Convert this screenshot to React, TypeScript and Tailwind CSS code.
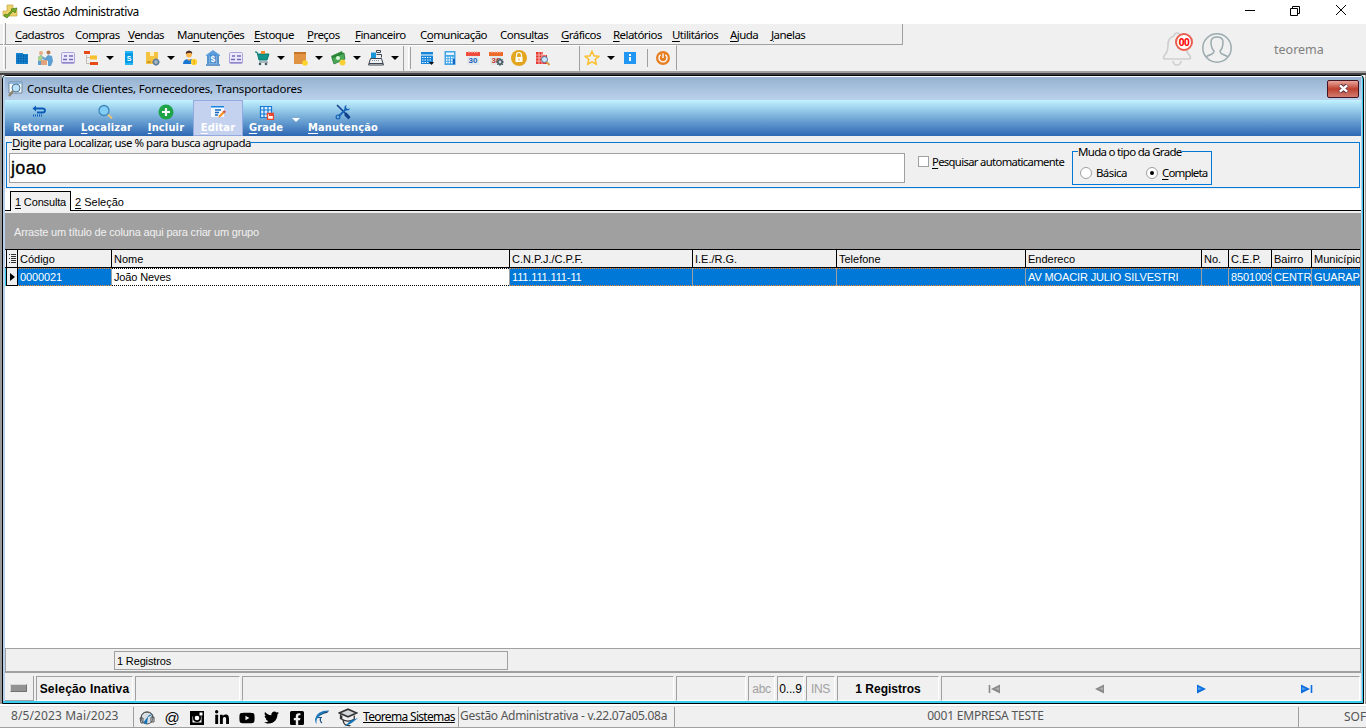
import type { ReactNode } from 'react';
import { clsx } from 'clsx';
import { FaFacebookSquare, FaLinkedinIn, FaTwitter, FaYoutube } from 'react-icons/fa';

const UI = 'font-[Noto_Sans,Open_Sans,sans-serif]';
const GRID = 'font-[Liberation_Sans,Arial,sans-serif]';

const menus = [
  { pre: '', key: 'C', post: 'adastros', w: 'w-[60px]' },
  { pre: 'Co', key: 'm', post: 'pras', w: 'w-[53px]' },
  { pre: '', key: 'V', post: 'endas', w: 'w-[49px]' },
  { pre: 'Ma', key: 'n', post: 'utenções', w: 'w-[77px]' },
  { pre: '', key: 'E', post: 'stoque', w: 'w-[53px]' },
  { pre: '', key: 'P', post: 'reços', w: 'w-[48px]' },
  { pre: '', key: 'F', post: 'inanceiro', w: 'w-[65px]' },
  { pre: 'C', key: 'o', post: 'municação', w: 'w-[80px]' },
  { pre: 'Consu', key: 'l', post: 'tas', w: 'w-[61px]' },
  { pre: '', key: 'G', post: 'ráficos', w: 'w-[52px]' },
  { pre: '', key: 'R', post: 'elatórios', w: 'w-[59px]' },
  { pre: '', key: 'U', post: 'tilitários', w: 'w-[58px]' },
  { pre: '', key: 'A', post: 'juda', w: 'w-[41px]' },
  { pre: '', key: 'J', post: 'anelas', w: 'w-[50px]' },
];

const columns = [
  { title: 'Código', value: '0000021', w: 'w-[94px]' },
  { title: 'Nome', value: 'João Neves', w: 'w-[398px]', focused: true },
  { title: 'C.N.P.J./C.P.F.', value: '111.111.111-11', w: 'w-[183px]' },
  { title: 'I.E./R.G.', value: '', w: 'w-[144px]' },
  { title: 'Telefone', value: '', w: 'w-[189px]' },
  { title: 'Endereco', value: 'AV MOACIR JULIO SILVESTRI', w: 'w-[176px]' },
  { title: 'No.', value: '', w: 'w-[27px]' },
  { title: 'C.E.P.', value: '8501009', w: 'w-[43px]' },
  { title: 'Bairro', value: 'CENTR', w: 'w-[40px]' },
  { title: 'Município', value: 'GUARAP', w: 'w-[49px]' },
];

function Icon({ children, className = 'size-4', box = 16 }: { children: ReactNode; className?: string; box?: number }) {
  return (
    <svg viewBox={`0 0 ${box} ${box}`} className={clsx('block shrink-0', className)} fill="none">
      {children}
    </svg>
  );
}

function Arrow() {
  return (
    <svg viewBox="0 0 8 4" className="block h-1 w-2 shrink-0">
      <path d="M0 0h8L4 4z" fill="#000" />
    </svg>
  );
}

function Grip() {
  return <div className="h-[22px] w-[3px] shrink-0 border-l border-r border-l-white border-r-[#a0a0a0]" />;
}

function CardIcon() {
  return (
    <Icon>
      <rect x="1.5" y="2.5" width="13" height="11" rx="1" fill="#ece9fc" stroke="#aaa3dc" />
      <path d="M4 6h3M3 9.5h4M9 6h4M9 9.5h4" stroke="#7469b6" strokeWidth="1.4" />
      <path d="M2 12.5h12" stroke="#8f87c8" />
    </Icon>
  );
}

function CalendarIcon({ color, gear }: { color: string; gear?: boolean }) {
  return (
    <Icon>
      <path d="M2 5h12v10H2z" fill="#e3e8ec" />
      <path d="M1 2h14v4H1z" fill={color} />
      <path d="M4 1v2M7 1v2M9.5 1v2M12 1v2" stroke="#f7b9a8" />
      <text x="3.6" y="13" fontSize="8" fontWeight="700" fill={gear ? '#c43d2c' : '#1565c0'} className="font-[Liberation_Sans,sans-serif]">
        30
      </text>
      {gear && (
        <>
          <circle cx="12" cy="12" r="2.2" fill="#cfd8dc" stroke="#455a64" strokeWidth="1.6" />
          <path d="M12 8v2M12 14v2M8 12h2M14 12h2M9.3 9.3l1 1M14 14l1 1M14.8 9.3l-1 1M9.3 14.8l1-1" stroke="#455a64" />
        </>
      )}
    </Icon>
  );
}

function MenuBar() {
  return (
    <div className="flex h-[21px] w-[903px] items-center border-b border-r border-[#a0a0a0] pl-[3px]">
      <Grip />
      <div className={clsx('ml-[9px] flex text-[11.5px] leading-[19px] tracking-[-0.55px]', UI)}>
        {menus.map((m) => (
          <div key={m.key + m.post} className={clsx('shrink-0 whitespace-nowrap', m.w)}>
            {m.pre}
            <span className="underline underline-offset-2">{m.key}</span>
            {m.post}
          </div>
        ))}
      </div>
    </div>
  );
}

function IconBar() {
  return (
    <div className="flex h-[25px] w-[677px] items-center border-t border-r border-t-white border-r-[#a0a0a0] pl-[3px]">
      <Grip />
      <div className="ml-2 flex w-[389px] shrink-0 items-center gap-[7px]">
        <Icon>
          <path d="M2 3h7v11H2zM9 4h5v10H9z" fill="#1685d4" />
          <path d="M2 6h12M2 8.5h12M2 11h12M9.5 4v10M12 5v9M4.5 4v10M7 4v10" stroke="#0760a6" strokeWidth=".7" />
        </Icon>
        <Icon>
          <circle cx="4" cy="3" r="2" fill="#e5ad84" />
          <circle cx="11.5" cy="2.5" r="2" fill="#b97b55" />
          <path d="M1 15V7l3-2 4 3 3-3 4 1 1 5-2 5h-3v-5l-3-1-3-1v6z" fill="#5e9fd3" />
          <path d="M1 7l3-2 2 2-2 4H1z" fill="#a9d08e" />
          <path d="M4 10h6v5H4z" fill="#e1a17a" />
        </Icon>
        <CardIcon />
        <Icon>
          <path d="M1 1h6v3H1zM7 12h8v3H7z" fill="#e64a19" />
          <path d="M7 5.5h7v4H7z" fill="#fbc02d" />
          <path d="M3.5 5v8.5H7M3.5 7.5H7" stroke="#b0a89c" strokeWidth=".7" />
        </Icon>
        <Arrow />
        <Icon>
          <path d="M4 1h8v14H4z" fill="#039be5" />
          <path d="M4 1h8v2H4zM4 13h8v2H4z" fill="#29b6f6" />
          <text x="5.8" y="11" fontSize="7" fontWeight="700" fill="#fff" className="font-[Liberation_Sans,sans-serif]">S</text>
        </Icon>
        <Icon>
          <path d="M2 2h12v12H2z" fill="#f5c342" />
          <path d="M6 2h4v4H6z" fill="#fff0bd" />
          <path d="M3 12h4" stroke="#a87918" />
          <circle cx="12" cy="12" r="2.5" fill="#fff" stroke="#607d9b" strokeWidth="1.7" />
          <path d="M12 8v8M8 12h8" stroke="#607d9b" strokeWidth=".7" />
        </Icon>
        <Arrow />
        <Icon>
          <circle cx="7" cy="4.5" r="3" fill="#ffb74d" />
          <path d="M4 4q-1-3 3-3.5 4 .5 3 3.5L9 3H6z" fill="#51342c" />
          <path d="M1 14q0-5 6-5t6 5z" fill="#1976d2" />
          <path d="M5 9l2 2 2-2" fill="#ffb74d" />
          <circle cx="12" cy="12" r="3.2" fill="#ffd43b" />
          <path d="M12 10v4" stroke="#e59d00" />
        </Icon>
        <Icon>
          <path d="M1 5l7-5 7 5v1H1z" fill="#5d9fdd" />
          <path d="M2 6h12v8H2z" fill="#a9d0f2" />
          <path d="M3 6v8M13 6v8M1 15h14" stroke="#3e7fc0" strokeWidth="1.5" />
          <path d="M4.5 4.5h7v9h-7z" fill="#478bcf" />
          <text x="5.6" y="12" fontSize="8.5" fontWeight="700" fill="#fff" className="font-[Liberation_Sans,sans-serif]">$</text>
        </Icon>
        <CardIcon />
        <Icon className="ml-[3px] size-4">
          <path d="M1 2h2l2 8h8l2-6H4" fill="#11958b" stroke="#087a72" />
          <path d="M7 1h4v3H7z" fill="#f08b32" />
          <path d="M5 12h9" stroke="#607d8b" />
          <circle cx="6" cy="14" r="1.3" fill="#455a64" />
          <circle cx="12" cy="14" r="1.3" fill="#455a64" />
        </Icon>
        <Arrow />
        <Icon>
          <path d="M2 2h12v12H2z" fill="#df9343" />
          <path d="M2 2h12v2H2z" fill="#c87728" />
          <circle cx="13" cy="13" r="2.8" fill="#ffd52d" />
        </Icon>
        <Arrow />
        <Icon>
          <path d="M1 6l11-5 2 5L3 11z" fill="#2d8b3e" />
          <path d="M2 8l12-5 1 6-11 5z" fill="#4aa957" stroke="#1b6d2b" strokeWidth=".7" />
          <circle cx="8" cy="8" r="2" fill="#d8f4d4" />
          <circle cx="12.5" cy="12.5" r="3" fill="#f8cf34" />
        </Icon>
        <Arrow />
        <Icon>
          <path d="M3 2.5h5v6H3z" fill="#1997dc" />
          <path d="M8.5.5h4v2h-4zM8.5 4.5h5v3M2.5 8.5h11l2 6.5H.5z" stroke="#3d4650" fill="#edf0f2" />
          <path d="M1 13.5h14" stroke="#3d4650" />
          <path d="M4 10.5h8" stroke="#87949c" strokeDasharray="1 1" />
        </Icon>
        <Arrow />
      </div>
      <div className="mr-[4px] h-[25px] shrink-0 border-l border-[#a0a0a0]" />
      <Grip />
      <div className="ml-[8px] flex w-[160px] shrink-0 items-center gap-[7px]">
        <Icon>
          <path d="M2 2h12v12H2z" fill="#1685d9" />
          <path d="M2 5h12" stroke="#fff" />
          <path d="M3 7.5h10M3 10h10M3 12.5h7" stroke="#e0f2ff" strokeDasharray="1.5 1" />
          <path d="M10 12h5l-2.5 3z" fill="#111" />
        </Icon>
        <Icon>
          <path d="M2.5 1h11v14h-11z" fill="#42a5e8" />
          <path d="M4 2.5h8v2.5H4z" fill="#e6f5ff" />
          <path d="M4 7.5h8M4 10h8M4 12.5h8" stroke="#fff" strokeWidth="1.3" strokeDasharray="1.5 1" />
          <path d="M11 9h2v5h-2z" fill="#1565c0" />
        </Icon>
        <CalendarIcon color="#ef4b3f" />
        <CalendarIcon color="#ed6b29" gear />
        <Icon>
          <circle cx="8" cy="8" r="8" fill="#e2a51d" />
          <path d="M5.5 7V5q0-2.5 2.5-2.5T10.5 5v2" stroke="#fff" strokeWidth="1.2" />
          <path d="M4.5 7h7v5h-7z" fill="#fff" />
          <path d="M7.5 8.5h1v2h-1z" fill="#e2a51d" />
        </Icon>
        <Icon>
          <path d="M2 2h7v3h4v9H2z" fill="#e53935" />
          <path d="M2 5h10M2 8h10M2 11h10M5 2v12M8 2v12" stroke="#ffd4ce" strokeWidth=".7" />
          <circle cx="10.5" cy="9.5" r="3" fill="#c9e7ff" stroke="#52749a" />
          <path d="M12.5 12l3 3" stroke="#d7a04a" strokeWidth="2" />
        </Icon>
      </div>
      <div className="mr-1 h-[25px] shrink-0 border-l border-[#a0a0a0]" />
      <div className="flex items-center gap-[7px]">
        <Icon>
          <path d="M8 1.5l2 4.3 4.7.5-3.5 3.2 1 4.7L8 11.8 3.8 14.2l1-4.7L1.3 6.3 6 5.8z" stroke="#fbc02d" strokeWidth="1.6" />
        </Icon>
        <Arrow />
        <Icon>
          <path d="M2 2h12v12H2z" fill="#2196f3" />
          <path d="M7 4h2v2H7zM7 7h2v4H7z" fill="#fff" />
        </Icon>
        <div className="ml-[2px] h-[18px] border-l border-[#a0a0a0]" />
        <Icon>
          <circle cx="8" cy="8" r="7" fill="#e67e22" />
          <path d="M5.5 4.8a4 4 0 105 0M8 3.5V8" stroke="#fff" strokeWidth="1.4" />
        </Icon>
      </div>
    </div>
  );
}

function ToolButton({ icon, hot, rest, className }: { icon: ReactNode; hot: string; rest: string; className: string }) {
  return (
    <div className={clsx('flex shrink-0 flex-col items-center pt-[4px] whitespace-nowrap', className)}>
      {icon}
      <span className="mt-px text-[11px] leading-[13px] font-bold text-white tracking-[0.15px]">
        <span className="underline underline-offset-2">{hot}</span>
        {rest}
      </span>
    </div>
  );
}

function ToolBar() {
  return (
    <div className="flex h-9 bg-linear-to-b from-[#c2f3ff] via-[#75abd8] to-[#2d67b3] font-[DejaVu_Sans_Condensed,DejaVu_Sans,sans-serif] [font-stretch:condensed]">
      <ToolButton
        className="w-[67px]"
        hot=""
        rest="Retornar"
        icon={
          <Icon>
            <path d="M5 4.5h6.5q2.5 0 2.5 2t-2.5 2H6" stroke="#0b5bb5" strokeWidth="1.8" />
            <path d="M5 1.5v6L1.5 4.5z" fill="#0b5bb5" />
            <path d="M2 11.5h10" stroke="#0b5bb5" strokeWidth="2" strokeDasharray="1 1" />
          </Icon>
        }
      />
      <ToolButton
        className="w-[69px]"
        hot="L"
        rest="ocalizar"
        icon={
          <Icon className="mr-[3px] size-4">
            <circle cx="7" cy="6.5" r="5" fill="#82cef7" stroke="#3f85bb" strokeWidth="1.3" />
            <path d="M11 10.5l4 4" stroke="#e8c477" strokeWidth="2" />
          </Icon>
        }
      />
      <ToolButton
        className="w-[50px]"
        hot="I"
        rest="ncluir"
        icon={
          <Icon>
            <circle cx="8" cy="8" r="7.5" fill="#1ea446" />
            <path d="M8 4v8M4 8h8" stroke="#fff" strokeWidth="2.2" />
          </Icon>
        }
      />
      <ToolButton
        className="ml-[2px] w-[50px] bg-[#c5d2ef] border border-[#93a9e0] !pt-[3px]"
        hot="E"
        rest="ditar"
        icon={
          <Icon>
            <path d="M1 2h13v11H1z" fill="#f4f8ff" />
            <path d="M1 2h13v1.5H1z" fill="#1685e0" />
            <path d="M5 6h6M5 8.5h4M5 11h3" stroke="#1468c4" strokeWidth="1.6" />
            <path d="M9 13l5-5" stroke="#f39a2b" strokeWidth="2.4" />
            <path d="M13.5 8.5l1.5-1.5" stroke="#df4637" strokeWidth="2.4" />
          </Icon>
        }
      />
      <ToolButton
        className="w-[46px]"
        hot="G"
        rest="rade"
        icon={
          <Icon>
            <path d="M2 2h12v12H2z" fill="#d7efff" />
            <path d="M2.5 2.5h11v11h-11zM2 6h12M2 10h12M6 2v12M10 2v12" stroke="#1679d3" strokeWidth="1.2" />
            <path d="M9.5 9.5h6v6h-6z" fill="#fff" stroke="#e6492f" strokeWidth="1.4" />
            <path d="M11 9h4v3h-4z" fill="#e6492f" />
          </Icon>
        }
      />
      <div className="ml-[3px] mt-[18px] w-2">
        <svg viewBox="0 0 8 4" className="block h-1 w-2">
          <path d="M0 0h8L4 4z" fill="#fff" />
        </svg>
      </div>
      <ToolButton
        className="w-[86px]"
        hot="M"
        rest="anutenção"
        icon={
          <Icon>
            <path d="M2 1l9 9" stroke="#123f8e" strokeWidth="1.6" />
            <path d="M9.5 9.5l2-1 4 4.5-2 2.5-4-4z" fill="#123f8e" />
            <path d="M4 12l7-7" stroke="#1763b6" strokeWidth="2" />
            <path d="M15 4.5L12.5 5 11 3.5 11.5 1Q9 1.5 9.5 5l1.5 1.5q3.5.5 4-2z" fill="#1763b6" />
            <circle cx="3" cy="13" r="1.9" stroke="#1763b6" strokeWidth="1.2" />
          </Icon>
        }
      />
    </div>
  );
}

function SearchPanel() {
  return (
    <div className={clsx('h-[53px] bg-[#f0f0f0] pl-px pr-px text-[11.5px]', UI)}>
      <fieldset className="relative mt-[6px] flex h-[46px] border border-[#0078d7]">
        <div className="absolute -top-[7px] left-[5px] bg-[#f0f0f0] leading-[14px] tracking-[-0.51px] whitespace-nowrap">
          <span className="underline underline-offset-2">D</span>igite para Localizar, use % para busca agrupada
        </div>
        <div className="mt-[10px] ml-[2px] h-[30px] w-[896px] border border-[#a0a0a0] bg-white pl-px text-[18px] leading-[28px] tracking-[0.35px] font-[Liberation_Sans,Arial,sans-serif] [-webkit-text-stroke:0.3px_#000]">
          joao
        </div>
        <div className="mt-[13px] ml-[13px] flex items-start">
          <span className="block size-[11px] border border-[#a0a0a0] bg-white" />
          <span className="ml-[3px] -mt-px leading-[14px] text-[11.25px] tracking-[-0.65px] whitespace-nowrap">
            <span className="underline underline-offset-2">P</span>esquisar automaticamente
          </span>
        </div>
        <div className="absolute left-[1065px] top-[8px] flex h-[34px] w-[140px] border border-[#0078d7] tracking-[-0.6px]">
          <span className="absolute -top-[7px] left-[5px] bg-[#f0f0f0] leading-[14px] tracking-[-0.7px] whitespace-nowrap">Muda o tipo da Grade</span>
          <span className="mt-[15px] ml-[7px] block size-3 rounded-full border border-[#a0a0a0] bg-white" />
          <span className="mt-[14px] ml-[4px] w-[50px] leading-[14px]">Básica</span>
          <span className="mt-[15px] flex size-3 shrink-0 items-center justify-center rounded-full border border-[#a0a0a0] bg-white">
            <span className="block size-1 rounded-full bg-black" />
          </span>
          <span className="mt-[14px] ml-[4px] leading-[14px] tracking-[-0.85px]">
            <span className="underline underline-offset-2">C</span>ompleta
          </span>
        </div>
      </fieldset>
    </div>
  );
}

function Tabs() {
  return (
    <div className={clsx('flex h-[24px] items-start border-b-2 border-[#f0f0f0] bg-white text-[11px]', GRID)}>
      <div className="h-[22px] w-[5px] shrink-0 border-b border-black" />
      <div className="mt-[2px] h-[20px] w-[61px] shrink-0 border border-b-0 border-black bg-[#f0f0f0] pl-[4px] leading-[21px] tracking-[-0.15px] whitespace-nowrap">
        <span className="underline underline-offset-2">1</span> Consulta
      </div>
      <div className="h-[22px] flex-1 border-b border-black pl-[4px] pt-[3px] leading-[20px]">
        <span className="underline underline-offset-2">2</span> Seleção
      </div>
    </div>
  );
}

function DottedLine({ focused }: { focused?: boolean }) {
  return (
    <svg className="block h-px w-full shrink-0" shapeRendering="crispEdges">
      <line x1="0" y1=".5" x2="100%" y2=".5" stroke={focused ? '#000' : '#ff8728'} strokeDasharray="1 1" />
    </svg>
  );
}

function DataGrid() {
  return (
    <div className={clsx('flex flex-1 flex-col border-r border-[#a0a0a0] text-[11px]', GRID)}>
      <div className="h-9 bg-[#a0a0a0] pl-[9px] leading-[38px] text-[#f0f0f0] tracking-[-0.18px]">
        Arraste um título de coluna aqui para criar um grupo
      </div>
      <div className="flex h-[19px] overflow-hidden border-y border-black bg-[#f0f0f0] pl-px">
        <div className="flex w-[12px] shrink-0 items-center justify-center border-x border-black">
          <svg viewBox="0 0 7 9" className="h-[9px] w-[7px]">
            <path d="M0 .5h1M2 .5h5M2 2.5h5M0 4.5h1M2 4.5h5M2 6.5h5M0 8.5h1M2 8.5h5" stroke="#000" strokeWidth=".8" />
          </svg>
        </div>
        {columns.map((c) => (
          <div key={c.title} className={clsx('shrink-0 overflow-hidden border-r border-black pl-[2px] leading-[18px] whitespace-nowrap', c.w)}>
            {c.title}
          </div>
        ))}
      </div>
      <div className="flex h-[18px] overflow-hidden pl-px">
        <div className="flex w-[12px] shrink-0 items-center justify-center border border-t-0 border-black bg-[#f0f0f0]">
          <svg viewBox="0 0 5 8" className="h-2 w-[5px]">
            <path d="M0 0l5 4-5 4z" fill="#000" />
          </svg>
        </div>
        {columns.map((c) => (
          <div key={c.title} className={clsx('flex shrink-0 flex-col border-r border-[#a0a0a0]', c.w, c.focused ? 'bg-white' : 'bg-[#0078d7] text-white')}>
            <DottedLine focused={c.focused} />
            <div className="h-4 overflow-hidden pl-[2px] leading-[16px] tracking-[-0.13px] whitespace-nowrap">{c.value}</div>
            <DottedLine focused={c.focused} />
          </div>
        ))}
      </div>
      <div className="flex-1 bg-white" />
      <div className="flex h-[25px] border-y border-b-2 border-l border-[#a0a0a0] bg-[#f0f0f0]">
        <div className="mt-[2px] ml-[108px] h-[19px] w-[394px] border border-[#a0a0a0] pl-[2px] leading-[18px] tracking-[-0.15px]">1 Registros</div>
      </div>
    </div>
  );
}

function Cell({ children, className }: { children?: ReactNode; className: string }) {
  return (
    <div className={clsx('flex h-[25px] shrink-0 items-center border-t border-r border-b border-l border-t-[#a0a0a0] border-l-[#a0a0a0] border-r-white border-b-white whitespace-nowrap', className)}>
      {children}
    </div>
  );
}

function NavArrow({ color, flip, bar }: { color: string; flip?: boolean; bar?: boolean }) {
  return (
    <svg viewBox="0 0 12 10" className={clsx('h-[10px] w-3', flip && '-scale-x-100')}>
      <path d="M0 .5l9 4.5-9 4.5z" fill={color} />
      <path d="M1 3l4 2-4 1z" fill="#fff" opacity=".35" />
      {bar && <path d="M10.5 1v8" stroke={color} strokeWidth="1.6" />}
    </svg>
  );
}

function StatusBar() {
  return (
    <div className={clsx('flex h-[28px] gap-[2px] bg-[#f0f0f0] pt-[3px] text-[12px]', GRID)}>
      <div className="flex h-[25px] w-[29px] items-center justify-center border-r border-b border-[#a0a0a0]">
        <div className="mr-px h-2 w-[17px] border border-t-[#d8d8d8] border-l-[#d8d8d8] border-r-[#707070] border-b-[#707070] bg-[#929292]" />
      </div>
      <Cell className="w-[97px] justify-center font-bold tracking-[0.2px]">Seleção Inativa</Cell>
      <Cell className="w-[105px]" />
      <Cell className="w-[432px]" />
      <Cell className="w-[70px]" />
      <Cell className="w-[27px] justify-center text-[#a0a0a0] tracking-[-0.3px]">abc</Cell>
      <Cell className="w-[27px] justify-center tracking-[-0.2px]">0...9</Cell>
      <Cell className="w-[29px] justify-center text-[#a0a0a0] tracking-[-0.4px]">INS</Cell>
      <Cell className="w-[102px] justify-center font-bold">1 Registros</Cell>
      <Cell className="w-[419px] justify-around">
        <NavArrow color="#8a8a8a" flip bar />
        <NavArrow color="#8a8a8a" flip />
        <NavArrow color="#0b6fe0" />
        <NavArrow color="#0b6fe0" bar />
      </Cell>
    </div>
  );
}

function Footer() {
  return (
    <div className={clsx('flex h-[21px] overflow-hidden border-b border-[#a0a0a0] bg-[#f0f0f0] text-[12px] leading-[18px] whitespace-nowrap text-[#555]', UI)}>
      <div className="w-[134px] shrink-0 border-r border-[#a0a0a0] pl-[11px] tracking-[0.1px]">8/5/2023 Mai/2023</div>
      <div className="flex w-[228px] shrink-0 items-center gap-[9px] pt-px pl-[5px] text-black">
        <Icon>
          <circle cx="8" cy="8" r="6" fill="#d9dee2" stroke="#555" />
          <path d="M2 9q0-7 6-7t6 6M1 8h3v5H2zM12 7h3v5h-3z" stroke="#555" />
          <path d="M4 13l6-8 5-1-6 3-1 7z" fill="#1775b7" />
        </Icon>
        <span className="w-4 text-center text-[15px] leading-4 font-[Liberation_Sans,sans-serif]">@</span>
        <Icon>
          <path d="M1 1h14v14H1z" fill="#000" />
          <path d="M3.5 6.5h9v6h-9z" fill="#fff" />
          <circle cx="8" cy="8" r="4" fill="#000" />
          <circle cx="8" cy="8" r="2.3" fill="#fff" />
          <path d="M10.5 2.5h3v3h-3z" fill="#fff" />
        </Icon>
        <FaLinkedinIn className="size-4 shrink-0" />
        <FaYoutube className="size-4 shrink-0" />
        <FaTwitter className="mr-px size-[15px] shrink-0" />
        <FaFacebookSquare className="size-4 shrink-0" />
        <Icon>
          <path d="M15.5.5Q3 0 1 9q0 3 1.500 5Q1.500 8 7 5z" fill="#1c78b8" />
          <path d="M15 1Q8 3 5 6q5-3 8-3z" fill="#123a67" />
          <path d="M4 7.500h4M6.500 8q-1 3 1.500 5" stroke="#1c4f80" strokeWidth="1.2" />
        </Icon>
        <Icon className="-ml-px size-[20px]">
          <path d="M1 4l7-3 7 3-7 3z" fill="#d5d8da" stroke="#333" strokeWidth="1.3" />
          <path d="M3 6v3q5 3 10 0V6M2 5v4M4 10q1 5 6 4" stroke="#333" />
          <path d="M5 15l5-5 6-2-5 4-4 2z" fill="#1775b7" />
        </Icon>
      </div>
      <div className="w-[97px] shrink-0 border-r border-[#a0a0a0] pl-px pt-px text-black underline tracking-[-0.68px]">Teorema Sistemas</div>
      <div className="w-[216px] shrink-0 border-r border-[#a0a0a0] pl-px tracking-[-0.29px]">Gestão Administrativa - v.22.07a05.08a</div>
      <div className="w-[624px] shrink-0 border-r border-[#a0a0a0] pr-[2px] text-center tracking-[-0.2px]">0001 EMPRESA TESTE</div>
      <div className="pl-[45px] pt-px">SOF</div>
    </div>
  );
}

export default function App() {
  return (
    <div className={clsx('flex h-[728px] w-[1366px] flex-col overflow-hidden bg-[#f0f0f0] text-black', UI)}>
      {/* Application title bar */}
      <div className="flex h-6 shrink-0 items-center bg-white pl-[2px]">
        <Icon>
          <path d="M5 1h6v5h4v6H1V7h4z" fill="#ecd269" stroke="#c3a744" strokeWidth=".7" />
          <path d="M2 12l3 2 6-7 2 2 2-5-6 1 1 1-5 5-2-1z" fill="#75ac25" stroke="#467719" strokeWidth=".7" />
        </Icon>
        <span className="ml-[5px] text-[12px] tracking-[-0.4px]">Gestão Administrativa</span>
        <svg viewBox="0 0 104 14" className="ml-auto mr-[18px] mb-[2px] h-[14px] w-[104px]" fill="none" stroke="#000">
          <path d="M1 6.5h10M46.5 4.5h7v7h-7zM48.5 4V2.500h7v7H54M92 1l10 10M102 1L92 11" />
        </svg>
      </div>

      <div className="flex h-[47px] shrink-0">
        <div className="w-[903px]">
          <MenuBar />
          <IconBar />
        </div>
        <div className="flex flex-1 items-center pl-[258px]">
          <div className="relative mt-[3px] size-[32px]">
            <svg viewBox="0 0 32 36" className="-mt-px h-9 w-8" fill="none" stroke="#cfcfcf" strokeWidth="1.7">
              <path d="M13 4a3 3 0 016 0c5 1.500 6 5 6 9 0 7 2 9 4 11 1 2 0 3-1 3H4c-1 0-2-1-1-3 2-2 4-4 4-11 0-4 1-7.500 6-9zM12 29a4 4 0 008 0" />
            </svg>
            <div className="absolute top-0 left-[14px] flex size-[18px] items-center justify-center rounded-full border-2 border-[#e95e50] bg-white text-[10px] font-bold tracking-[-0.5px] text-[#f00]">
              00
            </div>
          </div>
          <svg viewBox="0 0 32 32" className="ml-[8px] size-8" fill="none" stroke="#9aabae" strokeWidth="1.5">
            <circle cx="16" cy="16" r="14.2" />
            <path d="M5 25q1-1 6-3 2-1 2-3-3-3-3-9 0-5 6-5t6 5q0 6-3 9 0 2 2 3 5 2 6 3" />
          </svg>
          <span className="ml-[41px] mt-[5px] text-[12.5px] text-[#808080]">teorema</span>
        </div>
      </div>

      <div className="h-[2px] shrink-0 bg-[#a0a0a0]" />
      <div className="h-[2px] shrink-0 bg-[#404040]" />

      {/* Child window */}
      <div className="flex h-[629px] shrink-0 bg-[#f0f0f0]">
        <div className="w-[2px] bg-[#9a9a9a]" />
        <div className="flex w-[1362px] flex-col overflow-hidden rounded-t-[4px] border border-black bg-[#35cdf1] pb-[2px] pr-px">
          <div className="flex min-h-0 flex-1 flex-col border-x-2 border-t border-t-white border-r border-[#b8cfe9]">
            <div className="flex h-[23px] shrink-0 items-center bg-linear-to-b from-[#96b2d0] to-[#bad1eb] pl-[2px]">
              <Icon>
                <path d="M2 1h13v11H2z" fill="#f3faff" stroke="#6f879b" />
                <path d="M2 1h13v2H2z" fill="#8bb5dc" />
                <circle cx="9" cy="7" r="4" fill="#b9e2fa" stroke="#4e748e" />
                <path d="M6 10l-4 5" stroke="#8c8068" strokeWidth="2.2" />
              </Icon>
              <span className="ml-[4px] mt-px text-[11.5px] tracking-[-0.2px]">Consulta de Clientes, Fornecedores, Transportadores</span>
              <div className="ml-auto mr-[2px] flex h-[18px] w-[32px] items-center justify-center rounded-[2px] border border-[#431422] bg-linear-to-b from-[#e8a69c] via-[#bd3f2e] to-[#d27c70]">
                <svg viewBox="0 0 12 10" className="h-[9px] w-[11px]">
                  <path d="M2 1l8 8M10 1L2 9" stroke="#5a3040" strokeWidth="4.5" />
                  <path d="M2 1.500l8 7M10 1.500L2 8.500" stroke="#fff" strokeWidth="2.8" />
                </svg>
              </div>
            </div>
            <ToolBar />
            <SearchPanel />
            <Tabs />
            <DataGrid />
            <StatusBar />
          </div>
        </div>
        <div className="ml-px w-px bg-[#a0a0a0]" />
      </div>
      <div className="h-[3px] shrink-0 border-b border-[#e3e3e3] bg-white" />
      <Footer />
    </div>
  );
}
